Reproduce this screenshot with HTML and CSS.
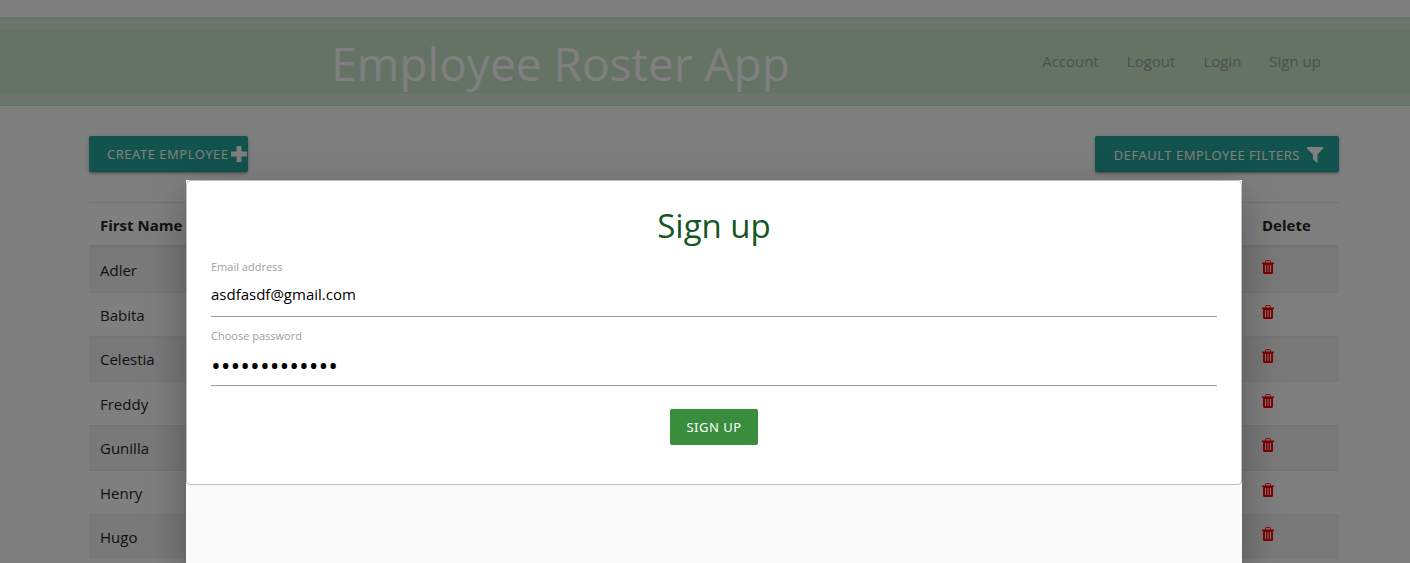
FILE: index.html
```html
<!DOCTYPE html>
<html lang="en">
<head>
<meta charset="utf-8">
<meta name="viewport" content="width=device-width, initial-scale=1">
<title>Employee Roster App</title>
<link rel="stylesheet" href="styles.css">
</head>
<body>
<svg class="sprite" aria-hidden="true">
  <symbol id="trash" viewBox="0 0 12 14">
    <path fill="none" stroke="currentColor" d="M3.5 3V1.5Q3.5.6 4.5.6h3q1 0 1 .9V3"/>
    <path fill="currentColor" fill-rule="evenodd" d="M0 2.500h12V4h-1v8.500q0 1.500-1.500 1.500h-7Q1 14 1 12.500V4H0zM3 5v7h1V5zm2.500 0v7h1V5zM8 5v7h1V5z"/>
  </symbol>
</svg>
<header class="banner">
  <nav class="navbar">
    <h1 class="brand">Employee Roster App</h1>
    <div class="links">
      <a href="#">Account</a>
      <a href="#">Logout</a>
      <a href="#">Login</a>
      <a href="#">Sign up</a>
    </div>
  </nav>
</header>
<main class="content">
  <div class="toolbar">
    <button class="btn create" type="button">Create Employee<svg width="16" height="16" viewBox="0 0 16 16" aria-hidden="true"><path fill="currentColor" d="M6 0h4q.5 0 .5.500V5.500h5q.5 0 .5.500v4q0 .5-.5.500h-5v5q0 .5-.5.500H6q-.5 0-.5-.5v-5h-5Q0 10.500 0 10V6q0-.5.500-.5h5v-5Q5.500 0 6 0z"/></svg></button>
    <button class="btn filters" type="button">Default Employee Filters<svg width="16" height="16" viewBox="0 0 16 16" aria-hidden="true"><path fill="currentColor" d="M0 0h16v1.500L10.500 7.500V16L6 12.500v-5L0 1.500z"/></svg></button>
  </div>
  <table class="roster">
    <thead><tr><th>First Name</th><th>Delete</th></tr></thead>
    <tbody>
      <tr><td>Adler</td><td><button class="trash" type="button" aria-label="Delete Adler"><svg width="12" height="14"><use href="#trash"/></svg></button></td></tr>
      <tr><td>Babita</td><td><button class="trash" type="button" aria-label="Delete Babita"><svg width="12" height="14"><use href="#trash"/></svg></button></td></tr>
      <tr><td>Celestia</td><td><button class="trash" type="button" aria-label="Delete Celestia"><svg width="12" height="14"><use href="#trash"/></svg></button></td></tr>
      <tr><td>Freddy</td><td><button class="trash" type="button" aria-label="Delete Freddy"><svg width="12" height="14"><use href="#trash"/></svg></button></td></tr>
      <tr><td>Gunilla</td><td><button class="trash" type="button" aria-label="Delete Gunilla"><svg width="12" height="14"><use href="#trash"/></svg></button></td></tr>
      <tr><td>Henry</td><td><button class="trash" type="button" aria-label="Delete Henry"><svg width="12" height="14"><use href="#trash"/></svg></button></td></tr>
      <tr><td>Hugo</td><td><button class="trash" type="button" aria-label="Delete Hugo"><svg width="12" height="14"><use href="#trash"/></svg></button></td></tr>
    </tbody>
  </table>
</main>
<div class="overlay">
  <section class="modal" role="dialog" aria-labelledby="signup-title">
    <form class="card">
      <h2 class="card-title" id="signup-title">Sign up</h2>
      <div class="field">
        <label for="email">Email address</label>
        <input id="email" type="email" value="asdfasdf@gmail.com">
      </div>
      <div class="field">
        <label for="password">Choose password</label>
        <input id="password" type="password" value="abcdefghijklm">
      </div>
      <button class="submit" type="submit">Sign up</button>
    </form>
  </section>
</div>
</body>
</html>
```
FILE: styles.css
```css
* {
  box-sizing: border-box;
}

body {
  margin: 0;
  height: 100vh;
  overflow: hidden;
  background: #fff;
  color: #212529;
  font: 15px/24px "Open Sans", "Noto Sans", sans-serif;
}

h1,
h2 {
  margin: 0;
  font-weight: 400;
}

button,
input {
  font-family: inherit;
}

.sprite {
  display: none;
}

.banner {
  margin-top: 17px;
  padding: 11px 0 12px;
  border: 1px solid #c3e6cb;
  border-width: 1px 0;
  background: #d4edda;
}

.navbar {
  display: flex;
  padding: 0 75px 0 93px;
  background: #c8e6c9;
}

.brand {
  flex: 1;
  height: 64px;
  padding-top: 2px;
  color: #fff;
  font-size: 46px;
  line-height: 64px;
  text-align: center;
}

.links {
  display: flex;
  line-height: 64px;
}

.links a {
  padding: 0 14px;
  color: #9e9e9e;
  text-decoration: none;
}

.content {
  padding: 30px 71px 0 89px;
}

.toolbar {
  display: flex;
  justify-content: space-between;
  margin-bottom: 30px;
}

.btn,
.submit {
  display: flex;
  align-items: center;
  height: 36px;
  padding: 0 16px;
  border: 0;
  border-radius: 2px;
  background: #26a69a;
  color: #fff;
  font-family: "Noto Sans", "Open Sans", sans-serif;
  font-size: 13px;
  line-height: 36px;
  letter-spacing: 0.5px;
  text-transform: uppercase;
  white-space: nowrap;
}

.btn {
  box-shadow: 0 2px 2px rgba(0, 0, 0, .14), 0 3px 1px -2px rgba(0, 0, 0, .12), 0 1px 5px rgba(0, 0, 0, .2);
}

.create {
  gap: 2px;
  padding: 0 1px 0 18px;
}

.filters {
  gap: 7px;
  padding: 2px 16px 0 19px;
}

.roster {
  width: 100%;
  border-collapse: separate;
  border-spacing: 0;
  text-align: left;
}

.roster th {
  height: 45px;
  padding: 2px 11px 0;
  border-top: 1px solid #e8e8e8;
  border-bottom: 2px solid #e8e8e8;
  font-weight: 700;
}

.roster th:last-child {
  width: 88px;
}

.roster td {
  height: 44px;
  padding: 0 11px;
  border-top: 1px solid #ebebeb;
}

.roster tbody tr:nth-child(odd) td {
  height: 45px;
  background: #f2f2f2;
}

.trash {
  display: block;
  margin-bottom: 6px;
  padding: 0;
  border: 0;
  background: none;
  color: #f00;
}

.trash svg {
  display: block;
}

.overlay {
  position: fixed;
  inset: 0;
  padding: 180px 168px 0 186px;
  background: rgba(0, 0, 0, .5);
}

.modal {
  height: 100%;
  background: #fafafa;
  box-shadow: 0 24px 38px 3px rgba(0, 0, 0, .14), 0 9px 46px 8px rgba(0, 0, 0, .12), 0 11px 15px -7px rgba(0, 0, 0, .2);
}

.card {
  padding: 24px 24px 39px;
  border: 1px solid #c0c0c0;
  border-radius: 4px;
  background: #fff;
}

.card-title {
  margin-bottom: 8px;
  color: #155724;
  font-size: 33px;
  line-height: 42px;
  text-align: center;
}

.field {
  margin-bottom: 7px;
}

.field label {
  display: block;
  color: #9e9e9e;
  font-size: 11px;
  line-height: 24px;
}

.field input {
  display: block;
  width: 100%;
  height: 38px;
  padding: 0 0 8px;
  border: 0;
  border-bottom: 1px solid #9e9e9e;
  outline: 0;
  background: none;
  color: #000;
  font-size: 15px;
}

.field input[type="password"] {
  padding-bottom: 4px;
  font-size: 26px;
}

.submit {
  margin: 23px auto 0;
  background: #388e3c;
}
```
